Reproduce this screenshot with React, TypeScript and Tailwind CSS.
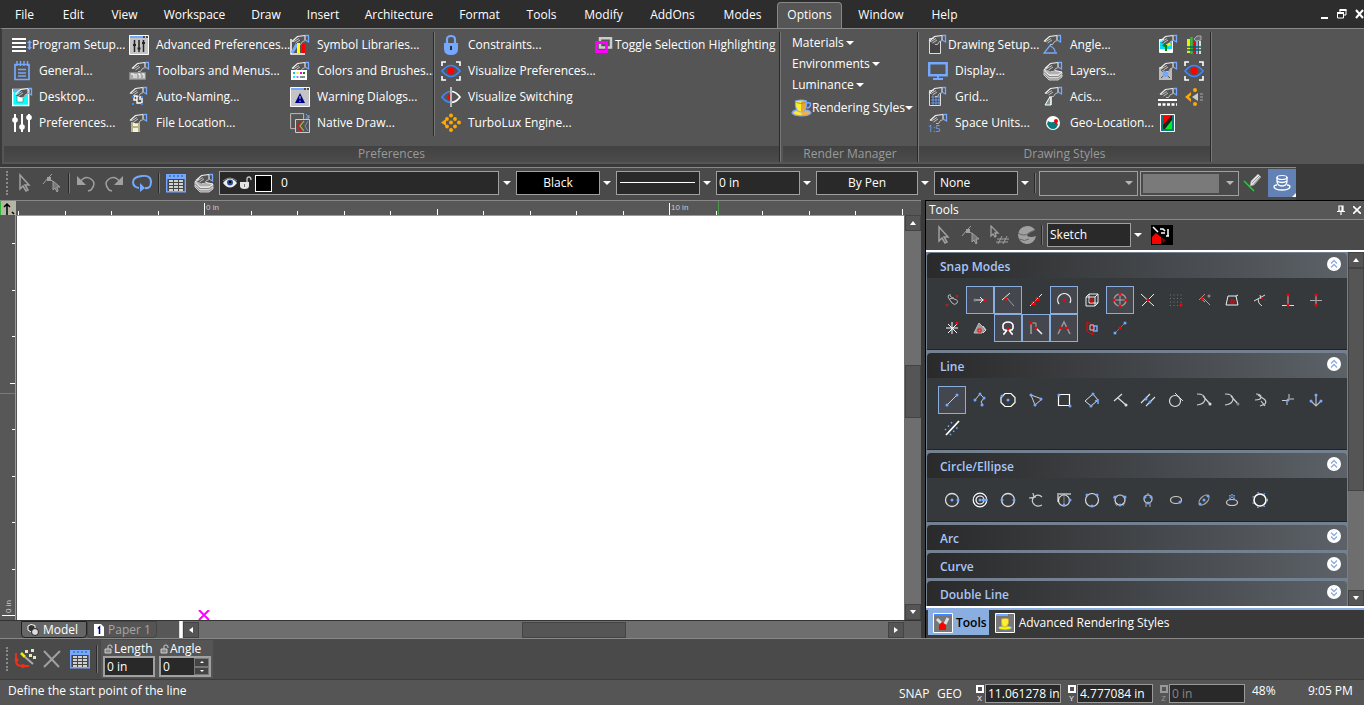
import React, { useState } from "react";
import clsx from "clsx";

const B = "#75a8ff";
const G = "#a0a0a0";
const R = "#ff0000";
const O = "#ffa800";

// hand with a blue cuff, sits on top of most of the "settings" icons
const Hand = ({ x = 0, y = 0 }: { x?: number; y?: number }) => (
  <g transform={`translate(${x} ${y})`}>
    <path d="M1 7.500 6 2 13 .5l1 5-3 1-2 3-3 0z" fill="#555" />
    <path d="M0 6.500 5.500 1.500 13 .5" stroke="#f4f4f4" strokeWidth="1.200" fill="none" />
    <path d="M0 6.500h2l5-3M3.500 8l4.500-3M6 9.500h2.500l2-3 3-1" stroke="#ccc" strokeWidth=".9" fill="none" />
    <path d="M13 .5h3.500v6.500l-3.500-2" fill="none" stroke={B} strokeWidth="1.300" />
    <path d="M13 1v4" stroke="#fff" />
  </g>
);

const Eye = () => (
  <>
    <path d="M1 10q9-11 18 0q-9 11-18 0z" fill="none" stroke="#3f86ff" strokeWidth="1.600" />
    <circle cx="10" cy="10" r="3.400" fill={R} />
    <path d="M1 5V1h4M15 1h4v4M19 15v4h-4M5 19H1v-4" fill="none" stroke="#fff" strokeWidth="1.600" />
  </>
);

const WindowFrame = () => (
  <>
    <path d="M.5.500h19v19H.5z" fill="#c4c4c4" stroke="#fff" />
    <path d="M1 1h13v2H1z" fill={B} />
    <path d="M14 2h2M17 2h2" stroke="#222" strokeWidth="1.500" />
  </>
);

const Cup = () => (
  <>
    <path d="M0 15q1-3 4-3h10q4 0 5 3-2 3-9.500 3T0 15z" fill="#f0b04a" stroke={B} strokeWidth="1.200" />
    <path d="M1.500 15q2 2 8 2.300V13H4z" fill="#ffe93a" />
    <path d="M3.500 3q6-2 11 0v5q-1 6-5.500 6T3.500 8z" fill="#ffee2a" stroke={B} strokeWidth="1.200" />
    <path d="M9 3.500 14 3v5q-1 5-5 5.500z" fill="#e8a33a" />
    <path d="M15 5q4-1 3.500 2T15 10" fill="none" stroke={B} strokeWidth="1.500" />
    <path d="M4.500 4.500q4 2 9 0" fill="none" stroke="#b98a2a" />
  </>
);

const Layers = () => (
  <>
    <path d="m1 12 5 5h9l4-3v2l-4 3H6l-5-5z" fill="#888" stroke="#ddd" strokeWidth=".9" />
    <path d="m1 9.500 5 5h9l4-3v2l-4 3H6l-5-5z" fill="#888" stroke="#ddd" strokeWidth=".9" />
    <path d="m1 8.500 6-3 5 4 7 1.500-4 3H6z" fill="#b0b0b0" stroke="#fff" strokeWidth=".9" />
    <Hand x={2} y={1} />
  </>
);

const icons: Record<string, React.ReactNode> = {
  setup: (
    <>
      <path d="M0 4h14M0 8h14M0 12h14M0 16h14" stroke="#fff" strokeWidth="2" />
      <path d="m17.500 5 2.500 3h-5zM17.500 15l2.500-3h-5zM16.500 8h2v4h-2z" fill={B} />
    </>
  ),
  general: (
    <>
      <path d="M3 3.500h14V18.500H3z" fill="none" stroke={B} strokeWidth="1.700" />
      <path d="M5 0v5M8.500 0v5M12 0v5M15.500 0v5M6 8.500h8M6 12h8M6 15h8" stroke={B} strokeWidth="1.400" />
    </>
  ),
  desktop: (
    <>
      <path d="M.7 2.500h16V18.500H.7z" fill="#0ff" stroke="#fff" strokeWidth="1.400" />
      <path d="M1 2h12v3H1z" fill={B} />
      <path d="M5 8h6v7H5z" fill="#fff" stroke="#777" strokeWidth=".7" />
      <Hand x={3} y={1} />
    </>
  ),
  sliders: (
    <>
      <path d="M3 1v18M10 1v18M17 1v18" stroke="#fff" strokeWidth="2" />
      <circle cx="3" cy="7" r="2.800" fill="#fff" />
      <circle cx="10" cy="14" r="2.800" fill="#fff" />
      <circle cx="17" cy="4.500" r="2.800" fill="#fff" />
    </>
  ),
  advanced: (
    <>
      <WindowFrame />
      <path d="M5.500 5v12M10 5v12M14.500 5v12" stroke="#222" strokeWidth="1.500" />
      <path d="M4 9h3v2H4zM8.500 12.500h3v2h-3zM13 7h3v2h-3z" fill="#222" />
    </>
  ),
  toolbars: (
    <>
      <Hand x={3} y={1} />
      <path d="M.5 11.500h16v7H.5z" fill="#aaa" stroke="#888" />
      <path d="M2 13h3v4M7 13v4M9 13h2v4M13 13h2v4" stroke="#fff" fill="none" />
    </>
  ),
  naming: (
    <>
      <Hand x={1} y={0} />
      <path d="M5 9h3v4H5zM8 12v4h5v-6h-2v3" fill="none" stroke="#fff" strokeWidth="1.400" />
      <path d="M3 9h2v2H3zM3 16h2v2H3zM12 16h2v2h-2zM12 9h2v2h-2z" fill="#3f86ff" />
    </>
  ),
  fileloc: (
    <>
      <path d="M2 9h9v10H2z" fill="#b9b384" />
      <path d="M4 9h5v4H4zM4 15h5v4H4z" fill="#f2f2e4" />
      <Hand x={1} y={1} />
    </>
  ),
  symbol: (
    <>
      <path d="M1 4v15h14" fill="none" stroke="#fff" strokeWidth="1.500" />
      <path d="m2 18 5-9" stroke={B} strokeWidth="3" />
      <Hand x={2} y={0} />
      <path d="M7 8h3v10H7z" fill="#ff0" />
      <path d="M12 9h3v9h-3z" fill={R} />
    </>
  ),
  colors: (
    <>
      <Hand x={2} y={1} />
      <path d="M1 9h16v10H1z" fill="#fff" />
      <path d="M3 11h2v2H3z" fill="#0cc" />
      <path d="M6.500 11h2v2h-2z" fill="#ee0" />
      <path d="M10 11h2v2h-2z" fill="#e0e" />
      <path d="M13 11h2v2h-2z" fill="#080" />
      <path d="M3 15h2v2H3z" fill="#0ff" />
      <path d="M6.500 15h2v2h-2z" fill="#88f" />
      <path d="M10 15h5v2h-5z" fill="#888" />
    </>
  ),
  warning: (
    <>
      <WindowFrame />
      <path d="M10 6 5 16h10z" fill="#000090" />
      <path d="M10 9v3M10 13.500v1.500" stroke="#c4c4c4" />
    </>
  ),
  native: (
    <>
      <path d="M.6.600h13v15H.6z" fill="none" stroke="#bbb" />
      <path d="M5.500 6.500h14v13h-14z" fill="#555" stroke="#ccc" />
      <path d="m11 8-4 5 4 5" fill="none" stroke={R} strokeWidth="1.100" />
      <path d="m14 8-4 5 4 5" fill="none" stroke="#bb3" strokeWidth="1.100" />
      <path d="m18 8-3 5 3 5" fill="none" stroke={B} strokeWidth=".7" />
      <path d="m16 1 3 4M19 2v3h-3" fill="none" stroke={B} />
    </>
  ),
  lock: (
    <>
      <path d="M6 9V4.500q0-3.500 4-3.500t4 3.500V9" fill="none" stroke={B} strokeWidth="2.200" />
      <path d="M3 8h14v6q0 6-7 6t-7-6z" fill={B} />
      <path d="M9 11h2v4H9z" fill="#234" />
    </>
  ),
  eye: <Eye />,
  eyeSwitch: (
    <>
      <path d="M10 4.500Q5 4.500 1 10q4 5.500 9 5.500" fill="none" stroke="#3f86ff" strokeWidth="1.700" />
      <path d="M10 4.500q5 0 9 5.500-4 5.500-9 5.500" fill="none" stroke="#fff" strokeWidth="1.700" />
      <path d="M10 6.500a3.500 3.500 0 0 0 0 7z" fill={R} />
      <path d="M10 0v20" stroke="#bbb" strokeWidth="2" />
    </>
  ),
  lux: (
    <g fill={O}>
      <path d="m0 9.500 5-3.500v7z" />
      <circle cx="10" cy="2.500" r="2" />
      <circle cx="6" cy="6" r="1.900" />
      <circle cx="14" cy="6" r="1.900" />
      <circle cx="10" cy="9.500" r="2" />
      <circle cx="18" cy="9.500" r="2" />
      <circle cx="6" cy="13.500" r="1.900" />
      <circle cx="14" cy="13.500" r="1.900" />
      <circle cx="10" cy="17" r="2" />
    </g>
  ),
  toggle: (
    <>
      <path d="M5 3.200h11v9.300H5z" fill="none" stroke="#ccc" strokeWidth="2.500" />
      <path d="M1.500 7.500h10v9h-10z" fill="none" stroke="#f0f" strokeWidth="2.800" />
    </>
  ),
  cup: <Cup />,
  drawing: (
    <>
      <path d="M1.500 3.500h11v15h-11z" fill="#444" stroke="#ddd" />
      <Hand x={1} y={0} />
    </>
  ),
  display: (
    <>
      <path d="M1.200 2.200h17.500v12H1.200z" fill="none" stroke={B} strokeWidth="2.400" />
      <path d="M9 15h2v3H9zM5 17h10v2H5z" fill={B} />
    </>
  ),
  grid: (
    <>
      <path d="M1.500 3.500h11v15h-11z" fill="#444" stroke="#ddd" />
      <path d="M3 10h9M3 13h9M3 16h9M5 8v10M8 8v10M11 8v10" stroke={B} strokeWidth=".8" />
      <Hand x={1} y={0} />
    </>
  ),
  units: (
    <>
      <Hand x={2} y={1} />
      <text x="0" y="19" fontSize="9" fill={B} fontFamily="Open Sans, sans-serif">
        1:5
      </text>
    </>
  ),
  angle: (
    <>
      <path d="m9 8-8 10h13M7 11q5 2 5 6" fill="none" stroke={B} strokeWidth="1.300" />
      <Hand x={1} y={0} />
    </>
  ),
  layers: <Layers />,
  acis: (
    <>
      <path d="M8 8 2 18h6zl0 10" fill="#7a9a9a" stroke="#fff" />
      <Hand x={2} y={0} />
    </>
  ),
  geo: (
    <>
      <circle cx="10" cy="10" r="7" fill="#fff" />
      <path d="M5 8q3 2 5 1t5 2q-1 5-5 5t-6-5z" fill="#087c7c" />
      <circle cx="13" cy="8" r="2" fill={R} />
      <path d="M12 9h2l-1 4z" fill={R} />
    </>
  ),
  image: (
    <>
      <path d="M1.500 4.500h13v13h-13z" fill="#0df" stroke="#fff" />
      <path d="M2 14h12v3H2z" fill="#fff" />
      <path d="M4 11q2-4 5-1v6H7v-4z" fill="#080" />
      <Hand x={2} y={0} />
      <circle cx="11" cy="9.500" r="1.800" fill="#ee0" />
    </>
  ),
  brushes: (
    <>
      <path d="M4.500 4v14" stroke="#ee0" strokeWidth="3" />
      <path d="M7.500 2v17" stroke="#3b3" strokeWidth="2.500" />
      <path d="M11 7v12" stroke={R} strokeWidth="2" />
      <path d="M13 6v13" stroke={B} strokeWidth="2" />
      <path d="M16 6v13" stroke="#ddd" strokeWidth="2" />
      <path d="M3 12h14M3 15h14" stroke="#066" strokeWidth="1.300" />
      <path d="M10 4 13 1h4v4l-5 1z" fill="#666" stroke="#ccc" strokeWidth=".7" />
    </>
  ),
  block: (
    <>
      <path d="M1 6h13v13H1z" fill="#bbb" />
      <path d="m3 9 9 8M12 9l-9 8" stroke="#555" />
      <circle cx="7.500" cy="13" r="3" fill={B} />
      <Hand x={2} y={1} />
    </>
  ),
  ruler: (
    <>
      <Hand x={2} y={1} />
      <path d="M0 13h19" stroke="#fff" strokeWidth="2" />
      <path d="M0 17.500h19" stroke="#fff" strokeWidth="2.500" strokeDasharray="3 1.500" />
    </>
  ),
  luxEye: (
    <>
      <g fill={O}>
        <path d="m1 10 6-5v3L5 10l2 2v3z" />
        <circle cx="11" cy="3" r="2" />
        <circle cx="11" cy="17" r="2" />
      </g>
      <path d="m8 10 6-4v8z" fill="#ccc" />
      <path d="M16 7h3M16 10h3M16 13h3" stroke="#aaa" />
    </>
  ),
  page: (
    <>
      <path d="M2.500 1.500h14v17h-14z" fill="#087c7c" stroke="#fff" />
      <path d="M5 3h9v13H5z" fill="#222" />
      <path d="M5 3h8L5 12z" fill={R} />
      <path d="M14 7v9H7z" fill="#0e2" />
    </>
  ),
};

const Icon = ({ name }: { name: string }) => (
  <svg viewBox="0 0 20 20" className="size-5 shrink-0 overflow-visible">
    {icons[name]}
  </svg>
);

const Caret = () => <span className="border-x-4 border-t-4 border-x-transparent border-t-white" />;

const Divider = () => <span className="w-[2px] border-l border-r border-l-[#2a2a2a] border-r-[#777]" />;

type Item = [icon: string, label: string, tight?: boolean];

const Column = ({ items, className }: { items: Item[]; className?: string }) => (
  <div className={clsx("flex flex-col", className)}>
    {items.map(([icon, label, tight]) => (
      <button key={icon} className={clsx("flex h-[26px] items-center whitespace-nowrap", tight ? "gap-0" : "gap-[7px]")}>
        <Icon name={icon} />
        {label}
      </button>
    ))}
  </div>
);

const PanelTitle = ({ children }: { children: React.ReactNode }) => (
  <div className="mt-auto h-4 bg-linear-to-b from-[#424242] to-[#4b4b4b] text-center leading-4 text-[#9a9a9a]">
    {children}
  </div>
);

const menus: [string, string][] = [
  ["File", "w-[49px]"],
  ["Edit", "w-[49px]"],
  ["View", "w-[53px]"],
  ["Workspace", "w-[87px]"],
  ["Draw", "w-[56px]"],
  ["Insert", "w-[58px]"],
  ["Architecture", "w-[94px]"],
  ["Format", "w-[67px]"],
  ["Tools", "w-[57px]"],
  ["Modify", "w-[67px]"],
  ["AddOns", "w-[71px]"],
  ["Modes", "w-[69px]"],
  ["Options", "w-[65px]"],
  ["Window", "w-[78px]"],
  ["Help", "w-[49px]"],
];

const MenuBar = () => {
  const [active, setActive] = useState("Options");
  return (
    <nav className="flex h-7 items-end bg-[#2d2d2d]">
      {menus.map(([name, width]) => (
        <button
          key={name}
          onClick={() => setActive(name)}
          className={clsx(
            "h-[26px] shrink-0 text-center",
            width,
            active === name && "rounded-t border border-b-0 border-[#888] bg-[#555] pb-[2px]",
          )}
        >
          {name}
        </button>
      ))}
      <div className="ml-auto flex h-full items-center gap-2">
        <button aria-label="Minimize">
          <svg viewBox="0 0 8 10" className="h-[10px] w-2">
            <path d="M0 8h7v2H0z" fill="#fff" />
          </svg>
        </button>
        <button aria-label="Restore">
          <svg viewBox="0 0 10 10" className="size-[10px]">
            <path d="M3 3V1h6v5H7M.5 4h6v5h-6z" fill="none" stroke="#fff" />
            <path d="M2.500 1h7M0 4h7" stroke="#fff" strokeWidth="2" />
          </svg>
        </button>
        <button aria-label="Close">
          <svg viewBox="0 0 9 10" className="h-[10px] w-[9px]">
            <path d="m1 1 7 8M8 1 1 9" stroke="#fff" strokeWidth="2" />
          </svg>
        </button>
      </div>
    </nav>
  );
};

const Ribbon = () => (
  <section className="flex h-[136px] border-t border-l-2 border-t-[#888] border-l-[#3a3a3a] bg-[#555] pt-[3px] pb-[2px] pl-[2px]">
    <div className="flex w-[775px] flex-col">
      <div className="flex pl-2">
        <Column
          className="w-[117px]"
          items={[
            ["setup", "Program Setup...", true],
            ["general", "General..."],
            ["desktop", "Desktop..."],
            ["sliders", "Preferences..."],
          ]}
        />
        <Column
          className="w-[161px]"
          items={[
            ["advanced", "Advanced Preferences..."],
            ["toolbars", "Toolbars and Menus..."],
            ["naming", "Auto-Naming..."],
            ["fileloc", "File Location..."],
          ]}
        />
        <Column
          className="w-[143px]"
          items={[
            ["symbol", "Symbol Libraries..."],
            ["colors", "Colors and Brushes..."],
            ["warning", "Warning Dialogs..."],
            ["native", "Native Draw..."],
          ]}
        />
        <Divider />
        <Column
          className="w-[160px] pl-[6px]"
          items={[
            ["lock", "Constraints..."],
            ["eye", "Visualize Preferences..."],
            ["eyeSwitch", "Visualize Switching"],
            ["lux", "TurboLux Engine..."],
          ]}
        />
        <Column items={[["toggle", "Toggle Selection Highlighting", true]]} />
      </div>
      <PanelTitle>Preferences</PanelTitle>
    </div>
    <Divider />
    <div className="ml-[2px] flex w-[134px] flex-col">
      <div className="flex flex-col pl-[9px]">
        {["Materials", "Environments", "Luminance"].map((name) => (
          <button key={name} className="flex h-[21px] items-center gap-[2px]">
            {name}
            <Caret />
          </button>
        ))}
        <button className="flex h-[26px] items-center whitespace-nowrap">
          <Icon name="cup" />
          Rendering Styles
          <Caret />
        </button>
      </div>
      <PanelTitle>Render Manager</PanelTitle>
    </div>
    <Divider />
    <div className="flex w-[291px] flex-col">
      <div className="flex pl-[9px]">
        <Column
          className="w-[115px]"
          items={[
            ["drawing", "Drawing Setup...", true],
            ["display", "Display..."],
            ["grid", "Grid..."],
            ["units", "Space Units..."],
          ]}
        />
        <Column
          className="w-[115px]"
          items={[
            ["angle", "Angle..."],
            ["layers", "Layers..."],
            ["acis", "Acis..."],
            ["geo", "Geo-Location..."],
          ]}
        />
        <Column
          className="w-[26px]"
          items={[
            ["image", ""],
            ["block", ""],
            ["ruler", ""],
            ["page", ""],
          ]}
        />
        <Column
          items={[
            ["brushes", ""],
            ["eye", ""],
            ["luxEye", ""],
          ]}
        />
      </div>
      <PanelTitle>Drawing Styles</PanelTitle>
    </div>
    <Divider />
  </section>
);

const Grip = () => <span className="h-6 w-[3px] shrink-0 border-l-2 border-dotted border-[#8a8a8a]" />;

const ArrowIcon = () => (
  <svg viewBox="0 0 20 20" className="size-5">
    <path d="M6 2v14l3-3 3 5 2-1-3-5h4z" fill="none" stroke={G} strokeWidth="1.500" />
  </svg>
);

const NodeIcon = () => (
  <svg viewBox="0 0 20 20" className="size-5">
    <path d="M1 11 6 5l4-4M7 6l5 3" fill="none" stroke={G} />
    <path d="M5 4h4v4H5z" fill={G} />
    <path d="M11 8v9l2-2 2 4 1-1-1-4h3z" fill="#777" stroke={G} />
  </svg>
);

const TableIcon = () => (
  <svg viewBox="0 0 20 20" className="size-5">
    <path d="M.7 1.700h18.600v17H.7z" fill="#444" stroke={B} strokeWidth="1.400" />
    <path d="M1 2h18v4H1z" fill={B} />
    <path d="M4 2v2M8 2v2M12 2v2M16 2v2" stroke="#357" />
    <path d="M3 8h14M3 11h14M3 14h14M3 17h14" stroke="#fff" strokeWidth="1.500" />
    <path d="M7.500 7v11M12.500 7v11" stroke="#444" />
  </svg>
);

const fieldBox = "border-[#a0a0a0] bg-[#292929] text-white";

const Combo = ({ label, value, className, width }: { label: string; value: string; className?: string; width: string }) => (
  <div className="flex items-center">
    <select aria-label={label} className={clsx("h-6 shrink-0 appearance-none border", fieldBox, width, className)}>
      <option>{value}</option>
    </select>
    <span className="flex w-4 justify-center pr-[2px]">
      <Caret />
    </span>
  </div>
);

const PropertyBar = () => (
  <div className="flex items-stretch bg-[#3a3a3a] pt-[3px]">
    <div className="flex h-[33px] items-center border-t border-[#888] bg-[#4a4a4a] pb-[2px] pl-[6px]">
      <Grip />
      <button aria-label="Select" className="ml-[5px]">
        <ArrowIcon />
      </button>
      <button aria-label="Edit node" className="ml-2">
        <NodeIcon />
      </button>
      <span className="mx-[6px] flex h-5">
        <Divider />
      </span>
      <button aria-label="Undo">
        <svg viewBox="0 0 20 20" className="size-5">
          <path d="M4 9q5-7 11-3t0 11l-3 1" fill="none" stroke={G} strokeWidth="1.500" />
          <path d="M1 3v9h9z" fill={G} />
        </svg>
      </button>
      <button aria-label="Redo" className="ml-2">
        <svg viewBox="0 0 20 20" className="size-5">
          <path d="M16 9Q11 2 5 6t0 11l3 1" fill="none" stroke={G} strokeWidth="1.500" />
          <path d="M19 3v9h-9z" fill={G} />
        </svg>
      </button>
      <button aria-label="Repeat" className="ml-2">
        <svg viewBox="0 0 20 20" className="size-5">
          <path d="M7 15Q1 14 1 9t9-6 9 6-6 6" fill="none" stroke={B} strokeWidth="2" />
          <path d="m8 10 5 5-5 4z" fill={B} />
        </svg>
      </button>
      <span className="mx-[6px] flex h-5">
        <Divider />
      </span>
      <button aria-label="Properties">
        <TableIcon />
      </button>
      <button aria-label="Layers" className="mr-[5px] ml-2">
        <Icon name="layers" />
      </button>
      <div className={clsx("flex h-6 w-[280px] items-center gap-[3px] border pl-[3px]", fieldBox)}>
        <svg viewBox="0 0 14 12" className="h-3 w-[14px]">
          <path d="M0 6q7-9 14 0-7 9-14 0z" fill="#eee" />
          <circle cx="7" cy="5.500" r="3" fill="#2a4f9a" />
          <circle cx="7" cy="5" r="1.300" fill="#000" />
          <path d="M0 4q7-6 14 0" fill="none" stroke="#888" />
        </svg>
        <svg viewBox="0 0 12 14" className="h-[14px] w-3">
          <path d="M7 7V3q0-2 2-2t2 3" fill="none" stroke="#ccc" strokeWidth="1.300" />
          <path d="M0 6h9v4q0 3-4.500 3T0 10z" fill="#e4e4e4" />
          <path d="M4 8h1v3H4z" fill="#777" />
        </svg>
        <span className="size-[17px] border border-white bg-black" />
        <select aria-label="Layer" className="h-full flex-1 appearance-none pl-[6px]">
          <option>0</option>
        </select>
      </div>
      <span className="flex w-[17px] justify-center pr-[2px]">
        <Caret />
      </span>
      <Combo label="Pen color" value="Black" width="w-[84px]" className="bg-black text-center" />
      <div className="relative">
        <Combo label="Line style" value="" width="w-[84px]" />
        <span className="pointer-events-none absolute top-[11px] left-1 w-[75px] border-t border-white" />
      </div>
      <Combo label="Line width" value="0 in" width="w-[84px]" className="pl-[2px]" />
      <Combo label="Brush color" value="By Pen" width="w-[102px]" className="text-center" />
      <Combo label="Brush style" value="None" width="w-[84px]" className="pl-[5px]" />
      <span className="mr-[3px] flex h-5">
        <Divider />
      </span>
      <div className="flex h-[25px] w-[99px] items-center justify-end border border-[#a0a0a0] pr-1">
        <span className="flex opacity-60">
          <Caret />
        </span>
      </div>
      <div className="ml-[2px] flex h-[25px] w-[99px] items-center justify-between border border-[#a0a0a0] pr-1 pl-[2px]">
        <span className="h-[19px] w-[76px] bg-[#7a7a7a]" />
        <span className="flex opacity-60">
          <Caret />
        </span>
      </div>
      <button aria-label="Pick style" className="ml-1">
        <svg viewBox="0 0 20 20" className="size-5">
          <path d="m1 8 10 10" stroke="#0e2" strokeWidth="1.200" />
          <path d="m7 13 1-5 7-7 3 3-7 8z" fill="#e4e4e4" stroke="#999" strokeWidth=".7" />
          <path d="m9 10 7-7M10.500 11.500 17 4" stroke="#777" strokeWidth=".7" />
        </svg>
      </button>
      <button aria-label="Render mode" className="relative ml-[5px] flex h-7 w-7 items-center justify-center bg-[#6281b4]">
        <svg viewBox="0 0 20 20" className="size-5">
          <path d="M5 12q-3 0-3 2 1 3 8 3t8-3q0-2-3-2" fill="none" stroke="#fff" strokeWidth="1.300" />
          <path d="M5 4v4q0 5 5 5t5-5V4M5 8q5 3 10 0" fill="none" stroke="#fff" strokeWidth="1.300" />
          <ellipse cx="10" cy="4.500" rx="5" ry="2" fill="none" stroke="#fff" strokeWidth="1.200" />
        </svg>
        <span className="absolute right-0 bottom-0 border-b-4 border-l-4 border-b-white border-l-transparent" />
      </button>
    </div>
  </div>
);

const hTicks = Array.from({ length: 20 }, (_, i) => Math.round(18 + i * 46.5));
const vTicks = Array.from({ length: 8 }, (_, i) => Math.round(28 + i * 46.5));

const ScrollButton = ({ dir }: { dir: "up" | "down" | "left" | "right" }) => (
  <button
    aria-label={`Scroll ${dir}`}
    className="flex size-4 shrink-0 items-center justify-center border border-[#444] bg-[#555]"
  >
    <svg
      viewBox="0 0 6 6"
      className={clsx("size-[6px]", dir === "down" && "rotate-180", dir === "left" && "-rotate-90", dir === "right" && "rotate-90")}
    >
      <path d="M3 1 6 5H0z" fill="#fff" />
    </svg>
  </button>
);

const Workspace = () => (
  <main className="flex min-w-0 flex-1 flex-col border-t border-[#888] bg-[#575757]">
    <div className="flex h-[14px] overflow-hidden">
      <svg viewBox="0 0 16 14" className="h-[14px] w-4 shrink-0 bg-[#b5b5a5]">
        <path d="M7 3v11M4 6l3-3 3 3M12 11l2 2" fill="none" stroke="#000" strokeWidth="1.500" />
        <path d="M0 0v14" stroke="#3b3" strokeWidth="2" />
      </svg>
      <svg className="h-[14px] flex-1">
        {hTicks.map((x, i) => (
          <path
            key={x}
            d={`M${x - 15.5} ${i === 4 || i === 14 ? 2 : i === 9 || i === 19 ? 8 : 10}V14`}
            stroke="#fff"
          />
        ))}
        <path d="M702.500 0v14" stroke="#4a9a4a" />
        <text x="190" y="9" fontSize="8" fill="#ccc" fontFamily="Liberation Sans, sans-serif">
          0 in
        </text>
        <text x="655" y="9" fontSize="8" fill="#ccc" fontFamily="Liberation Sans, sans-serif">
          10 in
        </text>
      </svg>
    </div>
    <div className="flex min-h-0 flex-1">
      <svg className="h-full w-4 shrink-0">
        {vTicks.map((y, i) => (
          <path key={y} d={`M${i === 3 ? 10 : 12} ${y + 0.5}H15`} stroke="#fff" />
        ))}
        <path d="M2 400.500h13" stroke="#fff" />
        <path d="M0 178.500h15" stroke="#4a9a4a" />
        <path d="M15.500 0v420" stroke="#999" />
        <text x="-398" y="11" transform="rotate(-90)" fontSize="8" fill="#ccc" fontFamily="Liberation Sans, sans-serif">
          0 in
        </text>
      </svg>
      <div className="relative flex-1 border-t border-l border-[#999] border-l-[#555] bg-white">
        <svg viewBox="0 0 12 10" className="absolute bottom-0 left-[181px] h-[10px] w-3">
          <path d="m1 0 10 10M11 0 1 10" stroke="#f0f" strokeWidth="2" />
        </svg>
      </div>
      <div className="flex w-[17px] flex-col items-end bg-[#6e6e6e]">
        <ScrollButton dir="up" />
        <div className="flex-[135]" />
        <div className="h-[53px] w-4 border border-[#444] bg-[#555]" />
        <div className="flex-[187]" />
        <ScrollButton dir="down" />
      </div>
    </div>
    <div className="flex h-[18px] items-stretch border-t border-[#333]">
      <button className="ml-[21px] flex w-[66px] items-center gap-1 rounded-b border border-[#222] bg-[#666] pl-[5px] whitespace-nowrap">
        <svg viewBox="0 0 12 12" className="size-3 shrink-0">
          <path d="M1 2 4 .5l4 1v5L4 8 1 6z" fill="#333" stroke="#fff" />
          <circle cx="8" cy="8" r="3.500" fill="#ddd" stroke="#222" />
        </svg>
        Model
      </button>
      <button className="flex w-[70px] items-center gap-1 rounded-b border border-[#444] bg-[#555] pl-[6px] whitespace-nowrap text-[#a5a5a5]">
        <svg viewBox="0 0 10 12" className="h-3 w-[10px] shrink-0">
          <path d="M0 0h7l3 3v9H0z" fill="#fff" />
          <path d="M4 4.500 5.500 3v7" fill="none" stroke="#008" strokeWidth="1.500" />
        </svg>
        Paper 1
      </button>
      <span className="ml-[22px] w-1 border-x border-[#ddd] bg-white" />
      <div className="flex flex-1 items-center bg-[#6e6e6e]">
        <ScrollButton dir="left" />
        <div className="flex-[322]" />
        <div className="h-4 w-[104px] border border-[#444] bg-[#555]" />
        <div className="flex-[262]" />
        <ScrollButton dir="right" />
      </div>
      <span className="w-[17px] bg-[#5e5e5e]" />
    </div>
  </main>
);

const Dot = ({ x, y, c = B }: { x: number; y: number; c?: string }) => (
  <circle cx={x} cy={y} r="1.500" fill={c} />
);

const snap: React.ReactNode[] = [
  <>
    <path d="m4 5 4 6q3 3 5 0t-3-4L6 4M4 5q0-3 3-2M5 8q0-2 5-2" stroke="#bbb" />
    <Dot x={3} y={13} c="#a22" />
    <Dot x={13} y={4} c="#a22" />
  </>,
  <>
    <path d="M3 8h9M8 5l3 3-3 3" stroke="#eee" />
    <Dot x={3} y={8} c="#888" />
    <Dot x={13} y={8} c={R} />
  </>,
  <>
    <path d="m2 8 8-7" stroke="#eee" />
    <path d="m7 6 7 8" stroke="#999" />
    <Dot x={6} y={7} c={R} />
  </>,
  <>
    <path d="M2 14 14 2" stroke="#eee" />
    <path d="M4 9.500h3v3H4zM8 5.500h3v3H8z" stroke={R} strokeWidth="1.200" />
  </>,
  <>
    <path d="M3 12A6.500 6.500 0 1 1 14 11" stroke="#eee" strokeWidth="1.300" />
    <Dot x={8} y={8} c={R} />
  </>,
  <>
    <path d="M2 5h9v9H2zM5 2h9v9M2 5l3-3M11 5l3-3M11 14l3-3M5 2v9h9" stroke="#eee" />
    <path d="M6 7h3v3H6z" stroke={R} />
  </>,
  <>
    <circle cx="8" cy="8" r="6" stroke="#999" strokeWidth="1.500" />
    <path d="M8 2v12M2 8h12" stroke="#aaa" />
    <Dot x={8} y={2} c={R} />
    <Dot x={8} y={14} c={R} />
    <Dot x={2} y={8} c={R} />
    <Dot x={14} y={8} c={R} />
  </>,
  <>
    <path d="m1 2 13 12M14 2 2 14" stroke="#eee" />
    <Dot x={8} y={8} c={R} />
  </>,
  <>
    <path d="M2 3h12M2 6.500h12M2 10h12M2 13.500h12" stroke="#777" strokeDasharray="1 2.500" />
    <Dot x={13} y={13} c={R} />
  </>,
  <>
    <path d="m3 8 6-6" stroke="#c88" />
    <path d="m7 6 7 7M4 6l5 4" stroke="#aaa" />
    <Dot x={6} y={7} c={R} />
    <Dot x={13} y={4} c="#888" />
  </>,
  <>
    <path d="M4 4h8l2 9H2zM12 4l2-1" stroke="#eee" />
    <path d="M7 8h3v3H7z" stroke={R} />
  </>,
  <>
    <path d="M2 9 13 3M6 7q0 5 4 7M8 3l1 4" stroke="#ddd" />
    <path d="m9 6 5 2" stroke={R} strokeDasharray="2 2" />
  </>,
  <>
    <path d="M2 13.500h12" stroke="#ddd" />
    <path d="M8 3v10" stroke="#a88" strokeWidth="1.500" />
    <Dot x={8} y={3} c={R} />
    <Dot x={8} y={13} c={R} />
  </>,
  <>
    <path d="M2 8.500h12" stroke="#aaa" />
    <path d="M8 3v10" stroke="#a88" strokeWidth="1.500" />
    <Dot x={8} y={3} c={R} />
    <Dot x={8} y={13} c={R} />
  </>,
  <>
    <path d="M2 8h12M8 2v12M4 4l9 9M13 4l-9 9" stroke="#fff" />
    <Dot x={13} y={3} c={R} />
  </>,
  <>
    <path d="M2 13 7 3l6 6-3 4z" fill="#999" stroke="#bbb" />
    <path d="M6 9h3v3H6z" stroke={R} />
    <path d="m11 6 3 4-3 3" stroke="#ddd" />
  </>,
  <>
    <path d="M3 14h1l3-4H4L3 8V5q1-3 5-3t5 3v3l-1 2H9l3 4h1" stroke="#fff" strokeWidth="1.600" />
    <Dot x={8} y={9} c={R} />
  </>,
  <>
    <path d="M3 3v11" stroke="#888" strokeWidth="2" />
    <path d="M3 3h5v5" stroke="#aaa" />
    <path d="m8 8 6 6" stroke="#eee" strokeWidth="1.500" />
    <Dot x={3} y={3} c={R} />
    <Dot x={8} y={8} c={R} />
  </>,
  <>
    <path d="M2 14 8 2l6 12" stroke="#999" strokeWidth="1.500" />
    <Dot x={5} y={8} c={R} />
    <Dot x={11} y={8} c={R} />
  </>,
  <>
    <path d="M3 2v9l6 4V5z" stroke={R} />
    <path d="M6 5h4v5H6z" stroke="#ccc" />
    <path d="M9 6h4v5H9" stroke={B} strokeWidth="1.500" />
  </>,
  <>
    <path d="M3 13 13 3" stroke="#777" />
    <Dot x={3} y={13} />
    <Dot x={8} y={8} c={R} />
    <Dot x={13} y={3} />
  </>,
];

const line: React.ReactNode[] = [
  <>
    <path d="M3 13 13 3" stroke="#ccc" />
    <Dot x={3} y={13} />
    <Dot x={13} y={3} />
  </>,
  <>
    <path d="m3 8 5-6 4 4-3 4 2 3" stroke="#ccc" />
    <Dot x={3} y={8} />
    <Dot x={8} y={2} />
    <Dot x={12} y={6} />
    <Dot x={10} y={13} />
  </>,
  <>
    <path d="M5 1.500h6l4 4v5l-4 4H5l-4-4v-5z" stroke="#fff" strokeWidth="1.200" />
    <Dot x={8} y={8} />
    <Dot x={2} y={4} />
  </>,
  <>
    <path d="m3 3 11 4-7 6z" stroke="#ccc" />
    <Dot x={3} y={3} />
    <Dot x={13} y={7} />
    <Dot x={7} y={13} />
  </>,
  <>
    <path d="M2.500 2.500h11v11h-11z" stroke="#fff" strokeWidth="1.200" />
    <Dot x={3} y={3} />
    <Dot x={14} y={14} />
  </>,
  <>
    <path d="m1 9 8-7 5 6-7 6z" stroke="#ddd" />
    <Dot x={9} y={2} />
    <Dot x={7} y={14} />
    <path d="M11 9l3-1v4" stroke={B} strokeWidth="1.500" />
  </>,
  <>
    <path d="m2 9 8-7M6 6l8 7" stroke="#ddd" strokeWidth="1.200" />
    <Dot x={14} y={13} c="#ddd" />
  </>,
  <>
    <path d="m1 11 9-9M6 14l9-9" stroke="#ddd" strokeWidth="1.200" />
    <Dot x={6} y={7} />
    <Dot x={10} y={10} />
  </>,
  <>
    <circle cx="7" cy="9" r="5.500" stroke="#ddd" strokeWidth="1.200" />
    <path d="m7 1 8 8" stroke="#ddd" />
  </>,
  <>
    <path d="M1 2q8 0 8 5t-8 6M7 4l7 8" stroke="#ccc" strokeWidth="1.200" />
    <Dot x={14} y={12} c="#ddd" />
  </>,
  <>
    <path d="M1 2q8 0 8 5t-8 6M7 4l7 8" stroke="#ccc" strokeWidth="1.200" />
    <Dot x={14} y={12} c="#888" />
  </>,
  <>
    <path d="M4 2q5 0 5 3t-6 3M6 3l6 4q3 2 1 5l-5 2M9 9l4 5" stroke="#ccc" strokeWidth="1.200" />
  </>,
  <>
    <path d="M9 2v6M10 7h4M2 8.500h5M7 8v5" stroke="#ccc" />
    <Dot x={8} y={8} />
  </>,
  <>
    <path d="M8 3v11M3 9l5 5 5-5" stroke="#bbc" strokeWidth="1.200" />
    <Dot x={8} y={3} />
    <Dot x={3} y={9} />
    <Dot x={13} y={9} />
  </>,
  <>
    <path d="M2 15 15 1" stroke="#fff" strokeWidth="1.800" />
    <path d="M1 10 10 0M6 15l9-9" stroke={B} strokeWidth="1.500" strokeDasharray="1.500 3" />
  </>,
];

const circle: React.ReactNode[] = [
  <>
    <circle cx="8" cy="8" r="6.500" stroke="#ddd" strokeWidth="1.300" />
    <Dot x={8} y={8} />
    <Dot x={14} y={8} />
  </>,
  <>
    <circle cx="8" cy="8" r="6.800" stroke="#fff" strokeWidth="1.200" />
    <circle cx="8" cy="8" r="4" stroke="#fff" strokeWidth="1.200" />
    <Dot x={8} y={8} />
    <Dot x={11} y={8} />
    <Dot x={14} y={8} />
  </>,
  <>
    <circle cx="8" cy="8" r="6.500" stroke="#ddd" strokeWidth="1.300" />
    <Dot x={2} y={8} />
    <Dot x={14} y={8} />
  </>,
  <>
    <path d="M14 5Q11 2 7 4q-4 3-2 7 3 5 9 2M1 6l7-1M5 1l1 5" stroke="#ccc" strokeWidth="1.200" />
  </>,
  <>
    <circle cx="8" cy="8.500" r="5.500" stroke="#ddd" strokeWidth="1.200" />
    <path d="M1 2h14M2 3v7" stroke="#fff" />
    <path d="M8 4v9" stroke="#888" />
    <Dot x={8} y={13} />
    <Dot x={14} y={8} />
  </>,
  <>
    <circle cx="8" cy="8" r="6.500" stroke="#ddd" strokeWidth="1.200" />
    <Dot x={3} y={3} />
    <Dot x={13} y={3} />
    <Dot x={8} y={14} />
  </>,
  <>
    <circle cx="8" cy="8" r="5" stroke="#ddd" strokeWidth="1.200" />
    <path d="m1 6 5-2M10 3l4 3M3 11l2 3M13 10l-2 4" stroke="#999" />
    <Dot x={3} y={5} />
    <Dot x={13} y={5} />
    <Dot x={8} y={13} />
  </>,
  <>
    <circle cx="8" cy="7" r="4" stroke="#ccc" strokeWidth="1.200" />
    <path d="M6 11v4M10 11v4M8 1v2" stroke="#aaa" />
    <Dot x={5} y={5} />
    <Dot x={11} y={5} />
    <Dot x={8} y={11} />
  </>,
  <>
    <ellipse cx="8" cy="8" rx="5.500" ry="3.500" stroke="#ccc" strokeWidth="1.200" />
    <Dot x={12} y={10} />
  </>,
  <>
    <ellipse cx="8" cy="8" rx="6" ry="3.500" transform="rotate(-45 8 8)" stroke="#aaa" strokeWidth="1.200" />
    <Dot x={8} y={8} />
    <Dot x={12} y={4} />
    <Dot x={4} y={12} />
  </>,
  <>
    <ellipse cx="8" cy="10.500" rx="5.500" ry="3" stroke="#ccc" strokeWidth="1.200" />
    <path d="M6 3v4M8 2v4M10 3v4" stroke={B} strokeWidth="1.500" strokeDasharray="1.500 1" />
  </>,
  <>
    <circle cx="8" cy="8" r="6" stroke="#fff" strokeWidth="1.600" />
    <circle cx="8" cy="8" r="7.500" stroke={B} strokeWidth="1.400" strokeDasharray="1.500 5" />
  </>,
];

type Group = { title: string; tools: React.ReactNode[]; on: number[] };

const groups: Group[] = [
  { title: "Snap Modes", tools: snap, on: [1, 2, 4, 6, 16, 17, 18] },
  { title: "Line", tools: line, on: [0] },
  { title: "Circle/Ellipse", tools: circle, on: [] },
  { title: "Arc", tools: [], on: [] },
  { title: "Curve", tools: [], on: [] },
  { title: "Double Line", tools: [], on: [] },
];

const ToolGroup = ({ title, tools, on }: Group) => (
  <section>
    <button className="flex h-[25px] w-full items-center justify-between rounded-t bg-linear-to-r from-[#2a2a2b] to-[#5c6268] pr-[6px] pl-[13px] text-left font-semibold text-[#a9c6f5]">
      <span className="pt-[3px]">{title}</span>
      <svg viewBox="0 0 14 14" className={clsx("mb-[3px] size-[14px]", !tools.length && "rotate-180")}>
        <circle cx="7" cy="7" r="7" fill="#fff" />
        <path d="m4 6.500 3-3 3 3M4 10.500l3-3 3 3" fill="none" stroke="#8fabdd" strokeWidth="1.300" />
      </svg>
    </button>
    {tools.length > 0 && (
      <div className="flex flex-wrap border-b border-[#222] bg-[#36393c] px-[11px] pt-2 pb-[7px]">
        {tools.map((tool, i) => (
          <button
            key={i}
            aria-label={`${title} ${i + 1}`}
            className={clsx("flex size-7 items-center justify-center", on.includes(i) && "border border-[#8aaee0] bg-[#45474f]")}
          >
            <svg viewBox="0 0 16 16" fill="none" className="size-4 shrink-0">
              {tool}
            </svg>
          </button>
        ))}
      </div>
    )}
  </section>
);

const ToolsDock = () => (
  <aside className="ml-1 flex w-[439px] flex-col border-t border-l border-black bg-[#383838]">
    <header className="flex h-[19px] items-center border-b border-[#888] bg-[#575757] pl-[3px]">
      Tools
      <button aria-label="Pin" className="ml-auto">
        <svg viewBox="0 0 8 10" className="h-[10px] w-2">
          <path d="M2 1h4v5H2zM0 6.500h8M4 6v4M5 1v5" fill="none" stroke="#fff" strokeWidth="1.200" />
        </svg>
      </button>
      <button aria-label="Close panel" className="mr-[3px] ml-2">
        <svg viewBox="0 0 8 8" className="size-2">
          <path d="m0 0 8 8M8 0 0 8" stroke="#fff" strokeWidth="1.600" />
        </svg>
      </button>
    </header>
    <div className="flex h-[30px] items-center gap-2 bg-[#4a4a4a] pl-[7px]">
      <button aria-label="Select">
        <ArrowIcon />
      </button>
      <button aria-label="Edit node">
        <NodeIcon />
      </button>
      <button aria-label="Select by grid">
        <svg viewBox="0 0 20 20" className="size-5">
          <path d="M2 1v10l2-2 2 3 1-1-1-3h3z" fill="none" stroke={G} strokeWidth="1.300" />
          <path d="M8 14h12M7 17h12M13 11l-4 8M18 11l-4 8" stroke={G} />
        </svg>
      </button>
      <button aria-label="Materials">
        <svg viewBox="0 0 20 20" className="size-5">
          <path d="M10 1a9 9 0 0 1 8 4q-7 2-8 6 4 2 9 0a9 9 0 1 1-9-10z" fill={G} />
          <path d="M1 8q6 4 11 0l6-3M2 14q6 3 10 0" fill="none" stroke="#666" />
        </svg>
      </button>
      <span className="-mr-1 -ml-1 flex h-5">
        <Divider />
      </span>
      <Combo label="Palette" value="Sketch" width="w-[84px]" className="pl-[2px]" />
      <button aria-label="Toolbox" className="-ml-1">
        <svg viewBox="0 0 22 20" className="h-5 w-[22px]">
          <path d="M0 0h22v20H0z" fill="#000" />
          <path d="M1 19v-7l4-4 5 4v7z" fill={R} />
          <path d="m2 2 5 5M9 4h3l2 2M10 8h4M17 4v7M15 11h3" fill="none" stroke="#fff" strokeWidth="1.500" />
          <path d="m11 13 4 2-3 3z" fill="#800" />
        </svg>
      </button>
    </div>
    <div className="flex min-h-0 flex-1 border-y-2 border-t-white border-b-white">
      <div className="flex flex-1 flex-col gap-[3px] overflow-hidden border-x border-t border-[#738090] bg-[#738090]">
        {groups.map((group) => (
          <ToolGroup key={group.title} {...group} />
        ))}
      </div>
      <div className="flex w-4 flex-col bg-[#6e6e6e]">
        <ScrollButton dir="up" />
        <div className="flex-[222] border border-[#444] bg-[#555]" />
        <div className="flex-[100]" />
        <ScrollButton dir="down" />
      </div>
    </div>
    <div className="flex h-[30px] items-start border-t-2 border-[#8aaee0] pl-[2px] whitespace-nowrap">
      <button className="flex h-[25px] items-center gap-[3px] bg-[#8aaee0] pr-[2px] pl-[5px] font-semibold text-black">
        <svg viewBox="0 0 20 20" className="size-5">
          <path d="M.5.500h19v19H.5z" fill="#777" stroke="#fff" />
          <path d="M1 1h18v2H1z" fill="#3f86ff" />
          <path d="m4 6 4 4M15 5l-3 6" stroke="#ddd" strokeWidth="3" />
          <path d="M6 17v-5l3-3 4 3v5z" fill={R} />
        </svg>
        Tools
      </button>
      <button className="flex h-[25px] items-center gap-1 pl-[6px]">
        <svg viewBox="0 0 20 20" className="size-5">
          <path d="M.5.500h19v19H.5z" fill="#777" stroke="#fff" />
          <path d="M1 1h12v2H1z" fill={B} />
          <path d="M3 15q1-2 4-2h6q4 0 4 2-2 2-7 2t-7-2z" fill="#fe0" stroke="#48d" strokeWidth=".7" />
          <path d="M6.500 6q4-1 7 0v4q-1 4-4 4t-3-4z" fill="#fe3" stroke="#ca3" strokeWidth=".8" />
        </svg>
        Advanced Rendering Styles
      </button>
    </div>
  </aside>
);

const LockLabel = ({ id, children }: { id: string; children: React.ReactNode }) => (
  <label htmlFor={id} className="flex h-[15px] items-center gap-px pl-px leading-[15px]">
    <svg viewBox="0 0 9 10" className="h-[10px] w-[9px]">
      <path d="M4 5V2q0-1 2-1t2 2v1" fill="none" stroke="#ccc" />
      <path d="M1 5h6v4H1z" fill="#888" stroke="#ccc" />
    </svg>
    {children}
  </label>
);

const InspectorBar = () => {
  const [length, setLength] = useState("0 in");
  const [angle, setAngle] = useState("0");
  return (
    <div className="flex h-[41px] items-center border-t border-[#888] bg-[#4a4a4a] pl-[6px]">
      <Grip />
      <button aria-label="Smart edit" className="ml-[5px]">
        <svg viewBox="0 0 22 22" className="size-[22px]">
          <path d="M2 5v8q0 5 6 5h7" fill="none" stroke="#f33015" strokeWidth="1.800" />
          <circle cx="2.500" cy="12" r="2" fill="#f33015" />
          <circle cx="9" cy="18" r="2" fill="#f33015" />
          <path d="m7 5 4 4" stroke="#ee0" strokeWidth="2.500" />
          <path d="m11 9 8 7" stroke="#aaa" strokeWidth="2" />
          <path d="M11 2h3v3h-3zM17 1h3v3h-3zM15 6h3v3h-3zM19 8h3v3h-3z" fill="#e8e8c0" />
        </svg>
      </button>
      <button aria-label="Cancel" className="ml-[6px]">
        <svg viewBox="0 0 20 20" className="size-5">
          <path d="m2 2 15 16M18 2 2 18" stroke={G} strokeWidth="2" />
        </svg>
      </button>
      <button aria-label="Properties" className="ml-2">
        <TableIcon />
      </button>
      <span className="mr-[3px] ml-[6px] flex h-7">
        <Divider />
      </span>
      <div className="flex h-[38px] gap-1 bg-[#555] px-[2px] pt-[1px]">
        <div className="flex flex-col">
          <LockLabel id="length">Length</LockLabel>
          <input
            id="length"
            value={length}
            onChange={(e) => setLength(e.target.value)}
            className={clsx("h-[21px] w-[52px] border-2 pl-[2px]", fieldBox)}
          />
        </div>
        <div className="flex flex-col">
          <LockLabel id="angle">Angle</LockLabel>
          <div className={clsx("flex h-[21px] w-[52px] border-2", fieldBox)}>
            <input id="angle" value={angle} onChange={(e) => setAngle(e.target.value)} className="min-w-0 flex-1 pl-[2px]" />
            <div className="flex w-[15px] flex-col">
              <button aria-label="Increase" className="flex flex-1 items-center justify-center border border-[#777] bg-[#444]">
                <span className="border-x-2 border-b-2 border-x-transparent border-b-white" />
              </button>
              <button aria-label="Decrease" className="flex flex-1 items-center justify-center border border-[#777] bg-[#444]">
                <span className="border-x-2 border-t-2 border-x-transparent border-t-white" />
              </button>
            </div>
          </div>
        </div>
      </div>
    </div>
  );
};

const Coord = ({ axis, value, disabled }: { axis: string; value: string; disabled?: boolean }) => (
  <div className="flex items-center gap-px">
    <label htmlFor={axis} className={clsx("flex w-[9px] flex-col items-center text-[8px] leading-[9px]", disabled ? "text-[#999]" : "text-white")}>
      <span className="size-2 border-2 border-current" />
      {axis}
    </label>
    <input
      id={axis}
      defaultValue={value}
      disabled={disabled}
      className={clsx("h-[19px] w-[76px] border border-[#999] bg-[#292929] pl-[2px]", disabled ? "text-[#888]" : "text-white")}
    />
  </div>
);

const StatusBar = () => (
  <footer className="flex h-[26px] items-center border-t border-[#3c3c3c] bg-[#555] pl-2">
    <span className="-mt-1">Define the start point of the line</span>
    <div className="ml-auto flex items-center pt-[2px]">
      <button className="w-[38px] text-left">SNAP</button>
      <button className="w-[38px] text-left">GEO</button>
      <div className="flex gap-[6px]">
        <Coord axis="X" value="11.061278 in" />
        <Coord axis="Y" value="4.777084 in" />
        <Coord axis="Z" value="0 in" disabled />
      </div>
    </div>
    <span className="-mt-1 ml-[7px] w-14">48%</span>
    <span className="-mt-1 w-14 whitespace-nowrap">9:05 PM</span>
  </footer>
);

export default function App() {
  return (
    <div className="flex h-screen flex-col overflow-hidden bg-[#3a3a3a] font-['Open_Sans',sans-serif] text-[12px] leading-4 text-white">
      <MenuBar />
      <Ribbon />
      <PropertyBar />
      <div className="flex min-h-0 flex-1">
        <Workspace />
        <ToolsDock />
      </div>
      <InspectorBar />
      <StatusBar />
    </div>
  );
}
